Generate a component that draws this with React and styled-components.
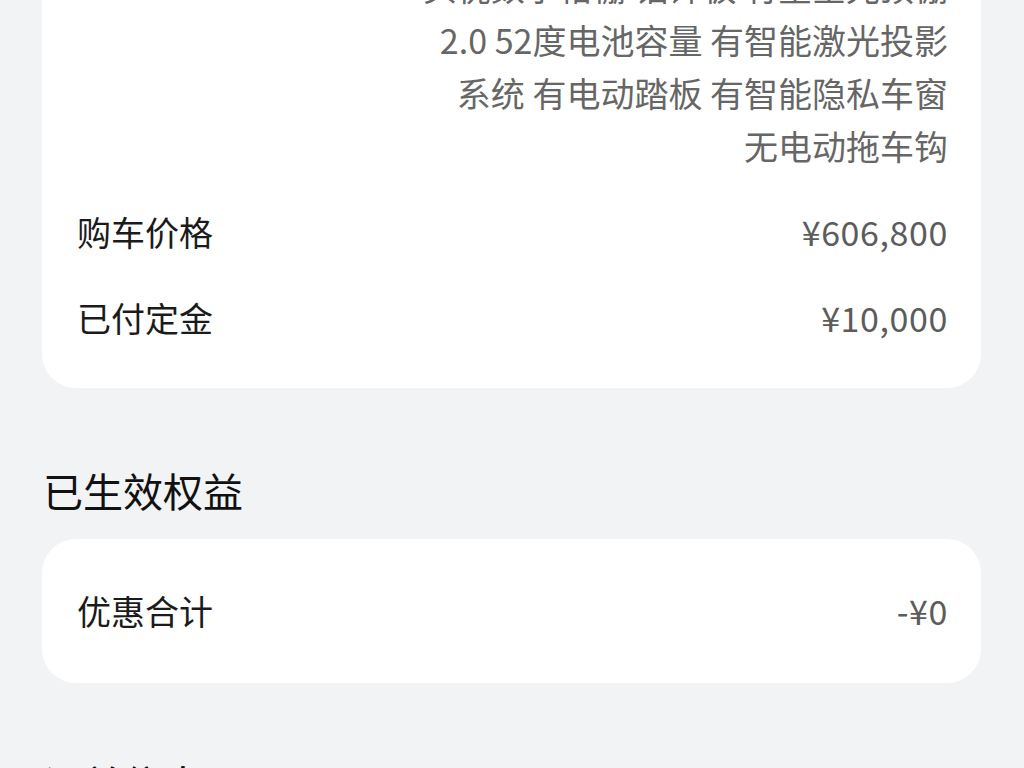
import React from "react";
import styled, { createGlobalStyle } from "styled-components";

const GlobalStyle = createGlobalStyle`
  html, body {
    margin: 0;
    padding: 0;
    background: #f2f3f5;
  }
  body {
    font-family: "Noto Sans CJK SC", "Noto Sans", sans-serif;
    -webkit-font-smoothing: antialiased;
  }
`;

const Viewport = styled.div`
  height: 768px;
  overflow: hidden;
  background: #f2f3f5;
`;

/* content is scrolled: the order card begins above the fold */
const Page = styled.main`
  margin-top: ${(p) => p.$scroll}px;
  padding: 0 43px 0 42px;
  display: flex;
  flex-direction: column;
`;

const Card = styled.section`
  background: #ffffff;
  border-radius: 34px;
  padding: ${(p) => p.$padding};
  display: flex;
  flex-direction: column;
  gap: ${(p) => p.$gap || 0}px;
`;

const Row = styled.div`
  display: flex;
  justify-content: space-between;
  align-items: flex-start;
  gap: 24px;
`;

const Label = styled.span`
  font-size: 34px;
  line-height: 53px;
  color: #1b1b1b;
  white-space: nowrap;
`;

const Value = styled.span`
  font-size: 34px;
  line-height: 53px;
  color: #5c5c5c;
  white-space: nowrap;
  letter-spacing: 0.6px;
`;

const SpecList = styled.div`
  display: flex;
  flex-direction: column;
  align-items: flex-end;
`;

const SpecLine = styled.span`
  font-size: 34px;
  line-height: 53px;
  color: #666666;
  white-space: pre;
  text-align: right;
`;

const SectionTitle = styled.h2`
  margin: ${(p) => p.$top}px 0 21px 1px;
  font-size: 40px;
  line-height: 56px;
  font-weight: 400;
  color: #111111;
`;

const specLines = [
  "后排独立座椅 有电动侧踏",
  "头枕数字格栅 铝饰板 有星空光顶棚",
  "2.0 52度电池容量 有智能激光投影",
  "系统 有电动踏板 有智能隐私车窗",
  "无电动拖车钩",
];

const priceRows = [
  { label: "购车价格", value: "¥606,800" },
  { label: "已付定金", value: "¥10,000" },
];

export default function App() {
  return (
    <Viewport>
      <GlobalStyle />
      <Page $scroll={-93}>
        <Card $padding="0 33px 44px 35px" $gap={33}>
          <Row>
            <Label>选装配置</Label>
            <SpecList>
              {specLines.map((line) => (
                <SpecLine key={line}>{line}</SpecLine>
              ))}
            </SpecList>
          </Row>
          {priceRows.map((row) => (
            <Row key={row.label}>
              <Label>{row.label}</Label>
              <Value>{row.value}</Value>
            </Row>
          ))}
        </Card>

        <SectionTitle $top={74}>已生效权益</SectionTitle>
        <Card $padding="45px 33px 46px 35px">
          <Row>
            <Label>优惠合计</Label>
            <Value>-¥0</Value>
          </Row>
        </Card>

        <SectionTitle $top={72}>订单信息</SectionTitle>
      </Page>
    </Viewport>
  );
}
